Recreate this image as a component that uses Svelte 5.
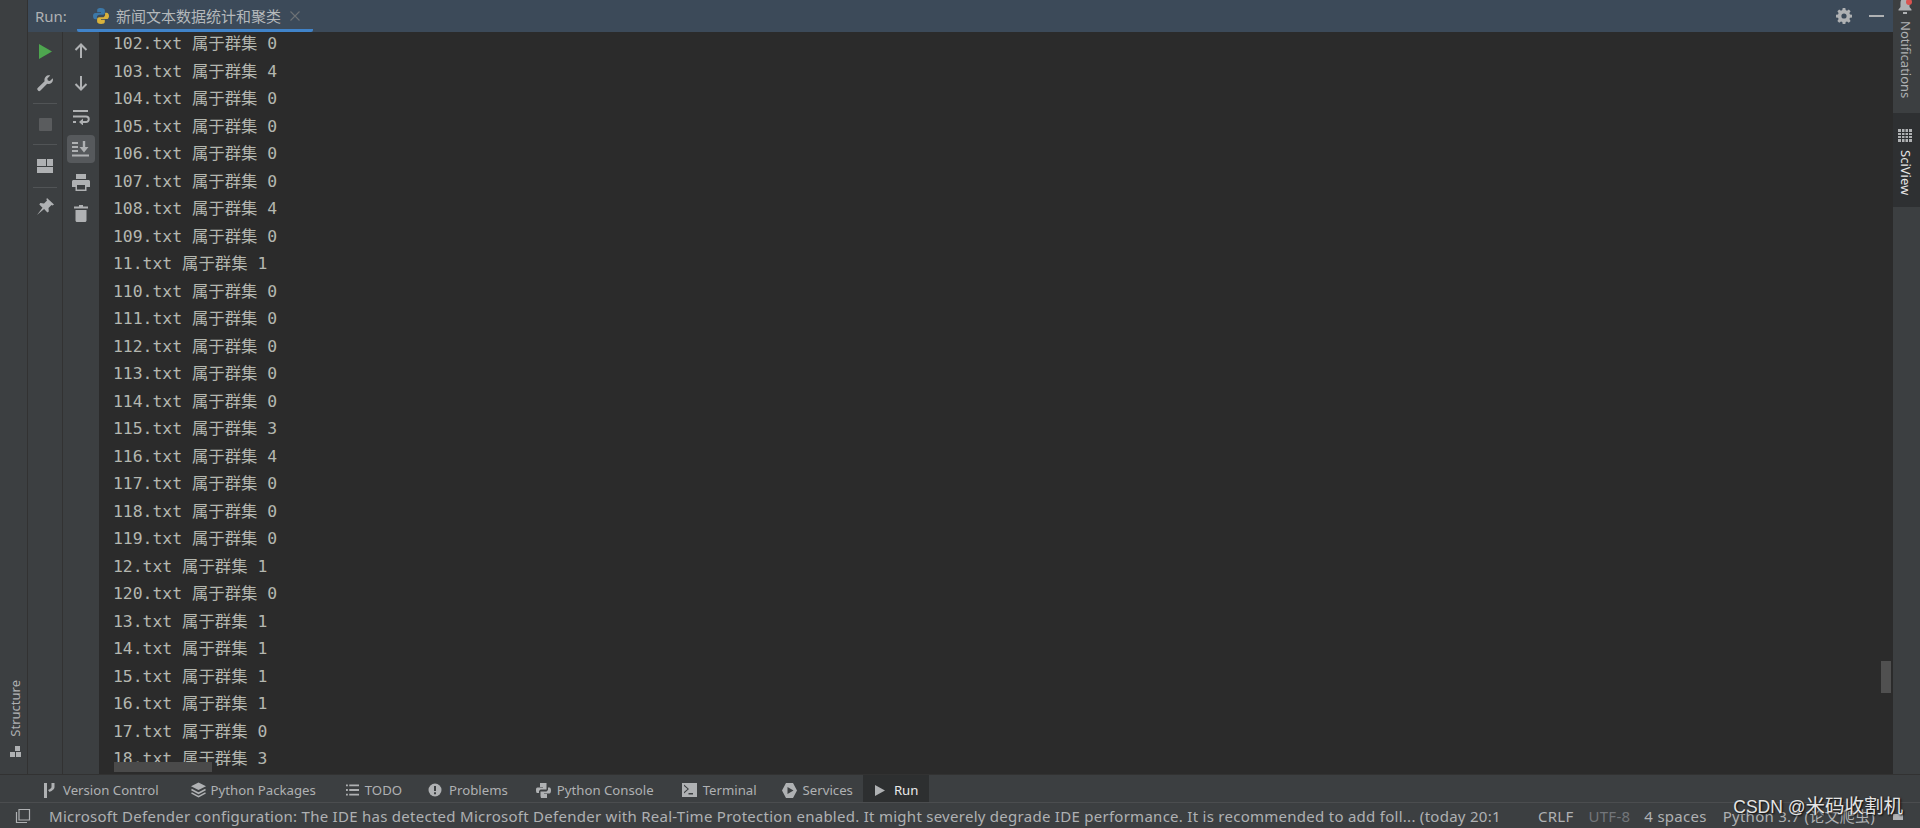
<script>
  const rows = [
    ['102', 0], ['103', 4], ['104', 0], ['105', 0], ['106', 0], ['107', 0], ['108', 4], ['109', 0],
    ['11', 1], ['110', 0], ['111', 0], ['112', 0], ['113', 0], ['114', 0], ['115', 3], ['116', 4],
    ['117', 0], ['118', 0], ['119', 0], ['12', 1], ['120', 0], ['13', 1], ['14', 1], ['15', 1],
    ['16', 1], ['17', 0], ['18', 3]
  ];
</script>

<div class="ide">
  <div class="main">
    <aside class="stripe left">
      <div class="vtab structure">
        <svg width="13" height="13" viewBox="0 0 13 13"><path d="M6 1h5v5H6zM1 7h5v5H1zM7 7h5v5H7z" fill="#afb1b3" /></svg>
        <span class="vtext rot-left">Structure</span>
      </div>
    </aside>

    <section class="center">
      <header class="runbar">
        <span class="runlabel">Run:</span>
        <div class="tab">
          <svg class="py" width="18" height="18" viewBox="0 0 18 18">
            <path d="M8.8 1C5.6 1 5.2 2.2 5.2 3.4V5.2h3.8v.7H3.4C2 5.900 1 7 1 9s1 3.300 2.400 3.300h1.500v-2c0-1.500 1.200-2.600 2.600-2.600h3.400c1.100 0 2-.9 2-2V3.400C12.900 2 11.600 1 8.800 1z" fill="#3c78a8" />
            <path d="M9.200 17c3.200 0 3.600-1.200 3.600-2.400v-1.800H9v-.7h5.600c1.400 0 2.400-1.100 2.400-3.100s-1-3.300-2.400-3.300h-1.500v2c0 1.500-1.200 2.600-2.600 2.600H7.100c-1.100 0-2 .9-2 2v2.300C5.100 16 6.400 17 9.200 17z" fill="#d9b23c" />
          </svg>
          <span class="tabtitle">新闻文本数据统计和聚类</span>
          <svg class="close" width="10" height="10" viewBox="0 0 10 10"><path d="M.5.500l9 9M9.500.500l-9 9" stroke="#6e7275" stroke-width="1.100" /></svg>
        </div>
        <div class="spacer"></div>
        <svg class="gear" width="16" height="16" viewBox="0 0 16 16">
          <path fill="#afb1b3" fill-rule="evenodd" d="M6.700 0h2.600l.4 2.100 1.300.6 1.800-1.200 1.800 1.800-1.200 1.800.6 1.300 2 .4v2.600l-2 .4-.6 1.300 1.200 1.800-1.800 1.800-1.800-1.200-1.300.6-.4 2.100H6.700l-.4-2.100-1.300-.6-1.800 1.200-1.800-1.800 1.200-1.800-.6-1.300-2-.4V6.800l2-.4.6-1.300-1.200-1.800 1.800-1.800 1.800 1.200 1.300-.6zM8 5.400a2.600 2.600 0 1 0 0 5.200 2.600 2.600 0 0 0 0-5.200z" />
        </svg>
        <span class="minimize"></span>
      </header>

      <div class="runbody">
        <div class="tools first">
          <button class="tool"><svg width="13" height="15" viewBox="0 0 13 15"><path d="M0 0l13 7.500L0 15z" fill="#4ea64f" /></svg></button>
          <button class="tool"><svg width="18" height="18" viewBox="0 0 18 18"><path fill="#afb1b3" d="M16.800 4.200c.5 2-.1 3.700-1.400 4.800-1.200 1-2.800 1.200-4.200.8L4.500 16.500a1.700 1.700 0 0 1-2.700-.3 1.700 1.700 0 0 1 .1-2.500l6.700-6.500C8.200 5.800 8.500 4 9.700 2.700 10.900 1.500 12.600 1 14.200 1.500L11.300 4.400l.5 2.100 2.100.5z" /></svg></button>
          <i class="sep"></i>
          <button class="tool"><span class="stop"></span></button>
          <i class="sep sep2"></i>
          <button class="tool"><svg width="16" height="14" viewBox="0 0 16 14"><path fill="#afb1b3" d="M0 0h9v7H0zM10 0h6v7h-6zM0 8h16v6H0z" /></svg></button>
          <i class="sep sep3"></i>
          <button class="tool"><svg width="18" height="18" viewBox="0 0 18 18"><path fill="#afb1b3" d="M11 0l7 6.500-1.500 1-1-.6-3 3 .3 3.600-1.400 1-3.300-3.500L1 17l5.500-7.200L3.300 6.600l1-1.500 3.700.4 3-3-.6-1.200z" /></svg></button>
        </div>
        <div class="tools second">
          <button class="tool"><svg width="14" height="16" viewBox="0 0 14 16"><path d="M7 15V2M1.500 7L7 1.500 12.500 7" fill="none" stroke="#afb1b3" stroke-width="2" /></svg></button>
          <button class="tool"><svg width="14" height="16" viewBox="0 0 14 16"><path d="M7 1v13M1.500 9L7 14.500 12.500 9" fill="none" stroke="#afb1b3" stroke-width="2" /></svg></button>
          <button class="tool"><svg width="18" height="16" viewBox="0 0 18 16"><path d="M1 2h15M1 7.500h13a2.500 2.500 0 0 1 0 5.500H9M1 13h3" fill="none" stroke="#afb1b3" stroke-width="2" /><path d="M11 9.500v7L7 13z" fill="#afb1b3" /></svg></button>
          <button class="tool active"><svg width="18" height="16" viewBox="0 0 18 16"><path d="M0 2h6M0 6h6M0 10h6M0 14.500h17" stroke="#afb1b3" stroke-width="2" /><path d="M12 0v8" stroke="#afb1b3" stroke-width="2.400" /><path d="M7.500 6h9L12 11.500z" fill="#afb1b3" /></svg></button>
          <button class="tool"><svg width="18" height="17" viewBox="0 0 18 17"><path fill="#afb1b3" fill-rule="evenodd" d="M4 0h10v5H4zM1.500 6h15c.8 0 1.500.7 1.500 1.500V13h-3.500v4h-11v-4H0V7.500C0 6.700.7 6 1.500 6zM5 11v4.500h8V11z" /></svg></button>
          <button class="tool"><svg width="14" height="17" viewBox="0 0 14 17"><path fill="#afb1b3" d="M5 0h4v1.500h5V3.500H0V1.500h5zM1.500 5h11v10.500c0 .8-.7 1.500-1.500 1.500H3c-.8 0-1.500-.7-1.500-1.500z" /></svg></button>
        </div>
        <div class="console">
          <div class="lines">
            {#each rows as [n, c]}
              <div class="line">{n}.txt 属于群集 {c}</div>
            {/each}
          </div>
          <span class="sb-h"></span>
          <span class="sb-v"></span>
        </div>
      </div>
    </section>

    <aside class="stripe right">
      <div class="vtab notif">
        <svg class="bell" width="16" height="16" viewBox="0 0 16 16"><path d="M8 0c3 0 4.500 2 4.500 5v4l2 2.500v1h-13v-1l2-2.500V5C3.500 2 5 0 8 0z" fill="#afb1b3" transform="translate(0 -2)" /><path d="M6 12h4v2H6z" fill="#afb1b3" /><circle cx="12" cy="2" r="3" fill="#d9534f" /></svg>
        <span class="vtext rot-right">Notifications</span>
      </div>
      <div class="vtab sci">
        <svg width="14" height="13" viewBox="0 0 14 13"><path fill="#afb1b3" d="M0 0h14v13H0z" /><path d="M0 3.500h14M0 6.500h14M0 9.500h14M3.500 0v13M7 0v13M10.500 0v13" stroke="#2e3032" stroke-width="1" /></svg>
        <span class="vtext rot-right white">SciView</span>
      </div>
    </aside>
  </div>

  <nav class="toolbar">
    <div class="tw">
      <svg width="11" height="15" viewBox="0 0 11 15"><path fill="#afb1b3" d="M0 0h3v15H0zM7.500 0h3v4c0 2.500-3 4-5 5L4 7c1.500-.7 3.500-1.500 3.500-3z" /></svg>
      <span>Version Control</span>
    </div>
    <div class="tw">
      <svg width="15" height="16" viewBox="0 0 16 16"><path fill="#afb1b3" d="M8 0l8 4-8 4-8-4z" /><path fill="none" stroke="#afb1b3" stroke-width="1.600" d="M.5 7.500L8 11.500l7.500-4M.5 11L8 15l7.500-4" /></svg>
      <span>Python Packages</span>
    </div>
    <div class="tw">
      <svg width="13" height="12" viewBox="0 0 14 12"><path fill="#afb1b3" d="M0 0h2v2H0zM3.500 0H14v2H3.500zM0 5h2v2H0zM3.500 5H14v2H3.500zM0 10h2v2H0zM3.500 10H14v2H3.500z" /></svg>
      <span>TODO</span>
    </div>
    <div class="tw">
      <svg width="14" height="14" viewBox="0 0 14 14"><circle cx="7" cy="7" r="6.500" fill="#afb1b3" /><path d="M6 3h2v5H6zM6 9.200h2v2H6z" fill="#3c3f41" /></svg>
      <span>Problems</span>
    </div>
    <div class="tw">
      <svg width="15" height="15" viewBox="0 0 15 15"><path fill="#afb1b3" d="M4 0h6.500v6.500H4.500L3 8v2H1C.3 10 0 8.500 0 7s.3-2.500 1.500-2.500H7V4H4z" /><path fill="#afb1b3" d="M5 15h6v-4H8v-.5h5.500c1 0 1.500-1.500 1.500-3s-.5-3-1.500-3H12v2.500L10.500 8.500H4.500V13z" /></svg>
      <span>Python Console</span>
    </div>
    <div class="tw">
      <svg width="15" height="14" viewBox="0 0 15 14"><path fill="#afb1b3" fill-rule="evenodd" d="M0 0h15v14H0zM2 3l3.500 3L2 9v1.500L7 6 2 1.500zM6.500 10v1.500H11V10z" /></svg>
      <span>Terminal</span>
    </div>
    <div class="tw">
      <svg width="15" height="15" viewBox="0 0 15 15"><path fill="#afb1b3" fill-rule="evenodd" d="M4 0h7l4 7.500L11 15H4L0 7.500zM5.500 4v7l6-3.500z" /></svg>
      <span>Services</span>
    </div>
    <div class="tw current">
      <svg width="10" height="11" viewBox="0 0 10 11"><path fill="#afb1b3" d="M0 0l10 5.500L0 11z" /></svg>
      <span>Run</span>
    </div>
  </nav>

  <footer class="status">
    <svg class="layout" width="16" height="16" viewBox="0 0 16 16"><path fill="none" stroke="#afb1b3" stroke-width="1.200" d="M4 1.500h10.500V12H4zM1.500 4v10.500H12" /></svg>
    <span class="msg">Microsoft Defender configuration: The IDE has detected Microsoft Defender with Real-Time Protection enabled. It might severely degrade IDE performance. It is recommended to add foll... (today 20:1</span>
    <div class="spacer"></div>
    <span class="seg crlf">CRLF</span>
    <span class="seg dim">UTF-8</span>
    <span class="seg sp">4 spaces</span>
    <span class="seg py37">Python 3.7 (论文爬虫)</span>
    <svg class="lock" width="10" height="8" viewBox="0 0 10 8"><path fill="#afb1b3" d="M0 2h10v6H0z" /></svg>
  </footer>

  <div class="watermark"><span class="wm-latin">CSDN @</span>米码收割机</div>
</div>

<style>
  :global(body) { margin: 0; background: #2b2b2b; overflow: hidden; }
  .ide {
    position: relative;
    display: flex;
    flex-direction: column;
    height: 100vh;
    font-family: "Noto Sans", "Open Sans", "Noto Sans CJK SC", sans-serif;
    color: #afb1b3;
    background: #3c3f41;
  }
  .main { flex: 1; display: flex; min-height: 0; }
  .stripe { width: 27px; flex: none; background: #3c3f41; display: flex; flex-direction: column; }
  .stripe.left { border-right: 1px solid #323232; justify-content: flex-end; }
  .vtab { display: flex; flex-direction: column; align-items: center; font-size: 13px; }
  .vtext { writing-mode: vertical-rl; white-space: nowrap; line-height: 1; }
  .rot-left { transform: rotate(180deg); }
  .structure { flex-direction: column-reverse; gap: 8px; padding: 0 0 16px 3px; }
  .notif { height: 113px; gap: 5px; overflow: hidden; justify-content: flex-start; padding-right: 3px; box-sizing: border-box; }
  .bell { flex: none; }
  .sci { height: 94px; background: #2e3032; padding: 16px 3px 0 0; gap: 8px; box-sizing: border-box; }
  .white { color: #e6e6e6; }

  .center { flex: 1; min-width: 0; display: flex; flex-direction: column; }
  .runbar {
    height: 32px;
    flex: none;
    display: flex;
    align-items: center;
    background: #3c4a59;
    padding-left: 7px;
    font-size: 15px;
    box-sizing: border-box;
  }
  .runlabel { width: 42px; flex: none; }
  .tab {
    display: flex;
    align-items: center;
    height: 32px;
    width: 236px;
    box-sizing: border-box;
    padding-left: 15px;
    border-bottom: 3px solid #4083c9;
    border-radius: 0 0 2px 2px;
    gap: 6px;
  }
  .py { flex: none; margin-top: 2px; }
  .tabtitle { font-size: 15px; white-space: nowrap; color: #b4b8bb; margin-top: 1px; }
  .close { margin-left: 3px; margin-top: 2px; }
  .spacer { flex: 1; }
  .gear { margin-right: 17px; }
  .minimize { width: 15px; height: 2px; background: #afb1b3; margin-right: 9px; }

  .runbody { flex: 1; min-height: 0; display: flex; }
  .tools {
    flex: none;
    display: flex;
    flex-direction: column;
    align-items: center;
    background: #3c3f41;
    border-right: 1px solid #323232;
    box-sizing: border-box;
  }
  .tools.first { width: 35px; padding-top: 5px; gap: 4px; }
  .tools.second { width: 36px; padding-top: 5px; gap: 4px; border-right: none; }
  .second .tool:nth-child(3) { margin-top: 2px; }
  .second .tool:nth-child(5) { margin-top: 1px; }
  .second .tool:nth-child(6) { margin-top: -1px; }
  .tool {
    width: 28px;
    height: 28px;
    padding: 0;
    border: 0;
    background: none;
    display: flex;
    align-items: center;
    justify-content: center;
    border-radius: 4px;
    margin: 0;
  }
  .active { background: #56595c; }
  .stop { width: 13px; height: 13px; background: #5a5c5e; border-radius: 1px; }
  .sep { width: 24px; height: 1px; background: #515456; margin: 2px 0; }
  .sep2 { margin-bottom: 3px; }
  .sep3 { margin: 3px 0 1px; }

  .console { position: relative; flex: 1; min-width: 0; background: #2b2b2b; overflow: hidden; }
  .lines {
    margin-top: -2px;
    padding-left: 14px;
    font-family: "DejaVu Sans Mono", "Liberation Mono", "Noto Sans CJK SC", monospace;
    font-size: 16.4px;
    line-height: 27.5px;
    color: #b4b7b0;
  }
  .line { white-space: pre; height: 27.5px; }
  .sb-h { position: absolute; left: 15px; bottom: 2px; width: 98px; height: 10px; background: #4a4a4a; }
  .sb-v { position: absolute; right: 2px; top: 629px; width: 10px; height: 32px; background: #505050; }

  .toolbar {
    flex: none;
    height: 29px;
    box-sizing: border-box;
    display: flex;
    align-items: stretch;
    padding-left: 44px;
    border-top: 1px solid #323232;
    border-bottom: 1px solid #4b4d4f;
    font-size: 13.2px;
    background: #3c3f41;
  }
  .tw { display: flex; align-items: center; gap: 6px; padding-top: 3px; white-space: nowrap; box-sizing: border-box; }
  .tw:nth-child(1) { gap: 8px; margin-right: 32px; }
  .tw:nth-child(2) { gap: 5px; margin-right: 30px; }
  .tw:nth-child(3) { margin-right: 26px; }
  .tw:nth-child(4) { gap: 7px; margin-right: 28px; }
  .tw:nth-child(5) { margin-right: 28px; }
  .tw:nth-child(6) { margin-right: 25px; }
  .tw:nth-child(7) { gap: 6px; margin-right: 10px; }
  .tw.current { background: #2d2f30; color: #eaeaea; padding: 3px 11px 0 12px; gap: 9px; }

  .status {
    flex: none;
    height: 25px;
    display: flex;
    align-items: center;
    font-size: 15px;
    letter-spacing: 0.27px;
    white-space: nowrap;
    background: #3c3f41;
  }
  .layout { margin-left: 15px; margin-right: 18px; flex: none; }
  .msg { flex: none; }
  .seg { flex: none; }
  .crlf { margin-right: 15px; }
  .dim { color: #73767a; margin-right: 14px; }
  .sp { margin-right: 16px; }
  .py37 { margin-right: 18px; }
  .lock { margin-right: 17px; flex: none; }

  .watermark {
    position: absolute;
    right: 17px;
    bottom: 9px;
    font-family: "Liberation Sans", "Noto Sans CJK SC", sans-serif;
    font-size: 19.5px;
    color: #e4e4e4;
    text-shadow: 1px 1px 2px #000;
    white-space: nowrap;
  }
  .wm-latin { font-size: 17.5px; }
</style>
